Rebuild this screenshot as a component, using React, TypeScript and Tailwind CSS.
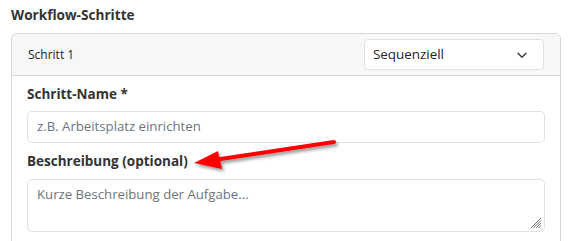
import React from 'react';

const font = { fontFamily: '"Open Sans", "Noto Sans", sans-serif' };

const ChevronDown: React.FC = () => (
  <svg width="14" height="14" viewBox="0 0 16 16" fill="none" stroke="#343a40" strokeWidth="1.6" strokeLinecap="round" strokeLinejoin="round">
    <path d="M3.5 6l4.5 4.5L12.5 6" />
  </svg>
);

const Arrow: React.FC = () => (
  <svg className="absolute left-0 top-0 pointer-events-none" width="568" height="241" viewBox="0 0 568 241">
    <defs>
      <filter id="shadow" x="-20%" y="-50%" width="140%" height="200%">
        <feDropShadow dx="2" dy="2.5" stdDeviation="1.5" floodColor="#000" floodOpacity="0.4" />
      </filter>
    </defs>
    <g filter="url(#shadow)">
      <line x1="334" y1="142" x2="214" y2="160" stroke="#ff0000" strokeWidth="4" strokeLinecap="round" />
      <polygon points="194,163 218,151 222,169" fill="#ff0000" />
    </g>
  </svg>
);

export default function App() {
  return (
    <div className="relative w-[568px] h-[241px] overflow-hidden bg-white text-[#212529]" style={font}>
      <div className="px-[11px] pt-[5px]">
        <h3 className="text-[13.6px] font-bold text-[#333] leading-[20px] mb-[8px]">Workflow-Schritte</h3>
        <div className="w-[550px] border border-[#d7d7d7] rounded-[6px]">
          <div className="flex items-center justify-between h-[42px] pl-[16px] pr-[16px] bg-[#f7f7f7] border-b border-[#d7d7d7] rounded-t-[6px]">
            <span className="text-[12px] text-[#212529]">Schritt 1</span>
            <div className="flex items-center justify-between w-[180px] h-[31px] pl-[8px] pr-[14px] bg-white border border-[#dee2e6] rounded-[4px]">
              <span className="text-[13.4px]">Sequenziell</span>
              <ChevronDown />
            </div>
          </div>
          <div className="px-[15px] pt-[8px] pb-[16px]">
            <label className="block text-[13.5px] font-bold text-[#333] leading-[20px] mb-[7px]">Schritt-Name *</label>
            <div className="h-[32px] flex items-center px-[9px] border border-[#dee2e6] rounded-[5px] text-[13.2px] text-[#6c757d]">
              z.B. Arbeitsplatz einrichten
            </div>
            <label className="block text-[13.5px] font-bold text-[#333] leading-[20px] mt-[8px] mb-[8px]">Beschreibung (optional)</label>
            <div className="relative h-[53px] px-[9px] pt-[5px] border border-[#dee2e6] rounded-[5px] text-[13.2px] text-[#6c757d]">
              Kurze Beschreibung der Aufgabe...
              <svg className="absolute right-[2px] bottom-[2px]" width="12" height="12" viewBox="0 0 12 12" stroke="#777" strokeWidth="1">
                <line x1="1" y1="11" x2="11" y2="1" />
                <line x1="3.5" y1="11" x2="11" y2="3.5" />
                <line x1="6" y1="11" x2="11" y2="6" />
                <line x1="8.5" y1="11" x2="11" y2="8.5" />
              </svg>
            </div>
          </div>
        </div>
      </div>
      <Arrow />
    </div>
  );
}
